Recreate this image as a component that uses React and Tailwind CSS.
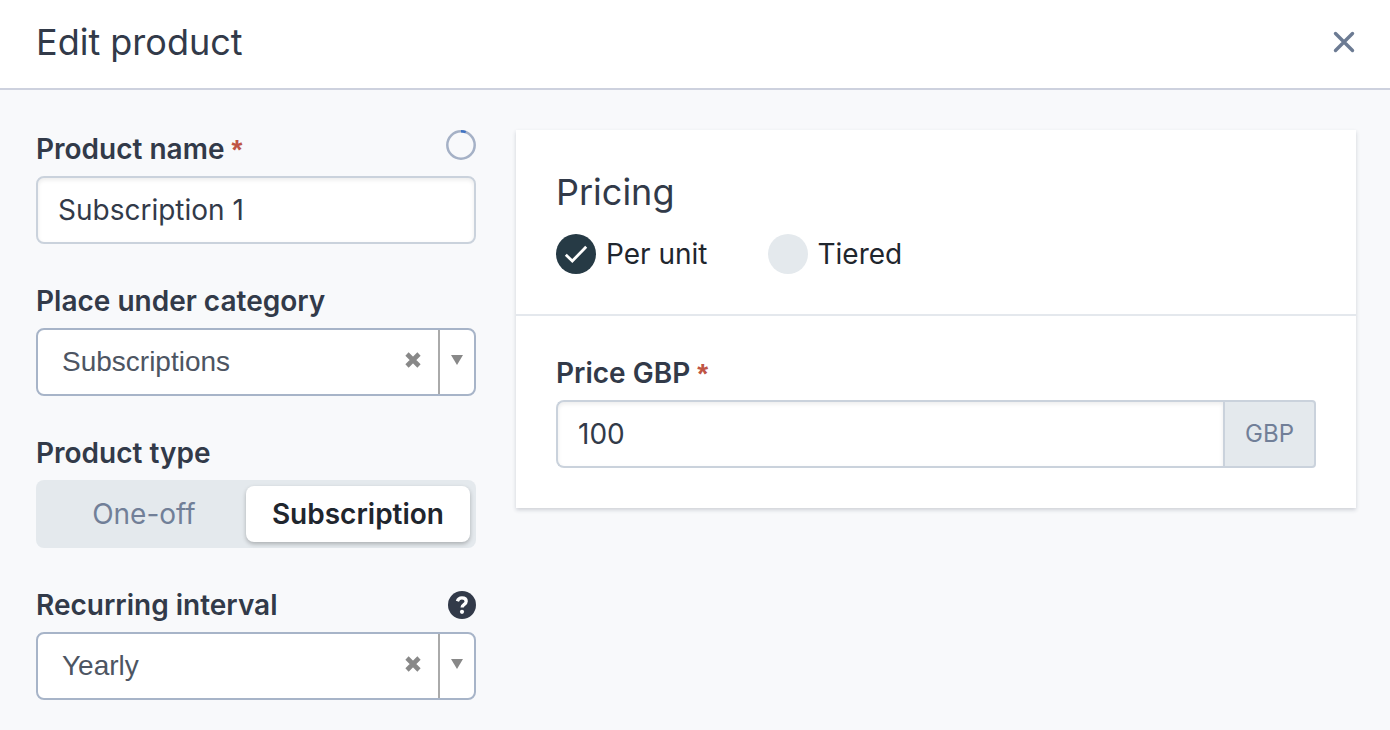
import { useState } from 'react'

const CATEGORIES = ['Subscriptions', 'Services', 'Hardware']
const INTERVALS = ['Yearly', 'Quarterly', 'Monthly']

function Label({ htmlFor, required, children }){
  return (
    <label htmlFor={htmlFor} className="text-[28px] leading-[38px] font-semibold text-[#323a49]">
      {children}
      {required && <> <span className="font-['Liberation_Sans',sans-serif] leading-none font-bold text-[#bf5545]">*</span></>}
    </label>
  )
}

function Spinner(){
  return (
    <svg viewBox="0 0 30 30" fill="none" strokeWidth="2.500" className="size-[30px]" role="status" aria-label="Saving">
      <circle cx="15" cy="15" r="13.700" stroke="#a5b1c6" />
      <path d="M15 1.300a13.700 13.700 0 0 1 4.700 .85" stroke="#3f73c4" />
    </svg>
  )
}

function HelpIcon(){
  return (
    <svg viewBox="0 0 28 28" fill="none" className="size-7">
      <circle cx="14" cy="14" r="14" fill="#323a49" />
      <path d="M9.400 10.200C10.100 7.900 11.700 6.800 13.900 6.800c2.600 0 4.300 1.300 4.300 3.400 0 1.700-.9 2.500-2.200 3.400-1.200.8-1.900 1.300-1.900 3" stroke="#fff" strokeWidth="3.300" />
      <circle cx="14" cy="20.800" r="2.100" fill="#fff" />
    </svg>
  )
}

function SelectBox({ id, value, setValue, options }){
  return (
    <div className="flex h-[68px] bg-white border-2 border-[#a7b4c8] rounded-lg overflow-hidden">
      <select id={id} value={value} onChange={e=>setValue(e.target.value)} className="flex-1 min-w-0 appearance-none pl-6 font-['Liberation_Sans',sans-serif] text-[28px] text-[#4d5562] outline-none">
        <option value=""></option>
        {options.map(o=> <option key={o} value={o}>{o}</option>)}
      </select>
      <button type="button" aria-label="Clear" onClick={()=>setValue('')} className="w-[50px] pb-1 flex items-center justify-center">
        <svg viewBox="0 0 16 16" className="size-4" stroke="#888" strokeWidth="4.600">
          <path d="M2 2l12 12M14 2L2 14" />
        </svg>
      </button>
      <label htmlFor={id} aria-label="Open list" className="w-9 pb-1 border-l-2 border-[#aaa] flex items-center justify-center">
        <svg viewBox="0 0 12 10" className="w-3 h-[10px]" fill="#888">
          <path d="M0 0h12L6 10z" />
        </svg>
      </label>
    </div>
  )
}

function TypeToggle({ type, setType }){
  return (
    <div role="group" aria-labelledby="type-label" className="flex h-[68px] p-[6px] bg-[#e4e9ed] rounded-lg text-[28px]">
      {['One-off','Subscription'].map(t=> (
        <button key={t} type="button" aria-pressed={type===t} onClick={()=>setType(t)} className={`rounded-lg ${type===t ? 'px-[26px] bg-white text-[#1f262e] font-semibold shadow-[0_2px_4px_rgba(0,0,0,0.25)]' : 'flex-1 text-[#717f98]'}`}>
          {t}
        </button>
      ))}
    </div>
  )
}

function PricingOption({ value, pricing, setPricing, children }){
  return (
    <label className="flex items-center gap-[10px] text-[28px] leading-10 text-[#1f262e]">
      <span className="grid place-items-center">
        <input type="radio" name="pricing" checked={pricing===value} onChange={()=>setPricing(value)} className="col-start-1 row-start-1 appearance-none size-10 rounded-full bg-[#e4e9ed] checked:bg-[#263a45]" />
        {pricing===value && (
          <svg viewBox="0 0 40 40" fill="none" stroke="#fff" strokeWidth="2.800" className="col-start-1 row-start-1 size-10 pointer-events-none">
            <path d="M9.800 20.800l6.500 6.200L30.200 12.800" />
          </svg>
        )}
      </span>
      {children}
    </label>
  )
}

export default function App(){
  const [name, setName] = useState('Subscription 1')
  const [category, setCategory] = useState('Subscriptions')
  const [type, setType] = useState('Subscription')
  const [interval, setInterval] = useState('Yearly')
  const [pricing, setPricing] = useState('unit')
  const [price, setPrice] = useState('100')

  return (
    <div className="min-h-screen flex flex-col bg-[#f8f9fb] font-['Inter',sans-serif] text-[#323a49]">
      <header className="flex items-center justify-between h-[90px] pl-9 pr-[34px] pb-1 bg-white border-b-2 border-[#cdd1de]">
        <h1 className="text-4xl">Edit product</h1>
        <button type="button" aria-label="Close" className="text-[#6c7b93]">
          <svg viewBox="0 0 24 24" fill="none" stroke="currentColor" strokeWidth="3.400" strokeLinecap="round" className="size-6">
            <path d="M3.500 3.500l17 17M20.500 3.500l-17 17" />
          </svg>
        </button>
      </header>

      <main className="flex items-start gap-10 pl-9 pr-[34px] pt-10 pb-[30px]">
        <div className="w-[440px] shrink-0 flex flex-col gap-[38px]">
          <div className="flex flex-col gap-2">
            <div className="flex items-start justify-between">
              <Label htmlFor="name" required>Product name</Label>
              <Spinner />
            </div>
            <input id="name" value={name} onChange={e=>setName(e.target.value)} className="w-full h-[68px] px-5 bg-white border-2 border-[#cad2dc] rounded-lg text-[28px] shadow-[inset_0_2px_4px_rgba(0,0,0,0.08)] outline-none" />
          </div>

          <div className="flex flex-col gap-2">
            <Label htmlFor="category">Place under category</Label>
            <SelectBox id="category" value={category} setValue={setCategory} options={CATEGORIES} />
          </div>

          <div className="flex flex-col gap-2">
            <span id="type-label" className="text-[28px] leading-[38px] font-semibold">Product type</span>
            <TypeToggle type={type} setType={setType} />
          </div>

          <div className="flex flex-col gap-2">
            <div className="flex items-center justify-between">
              <Label htmlFor="interval">Recurring interval</Label>
              <button type="button" aria-label="Help"><HelpIcon /></button>
            </div>
            <SelectBox id="interval" value={interval} setValue={setInterval} options={INTERVALS} />
          </div>
        </div>

        <section className="flex-1 min-w-0 bg-white shadow-[0_2px_4px_rgba(40,50,70,0.2)]">
          <div className="p-10 border-b-2 border-[#e4e8ed]">
            <h2 className="mb-5 text-4xl leading-[44px]">Pricing</h2>
            <div className="flex gap-[60px]">
              <PricingOption value="unit" pricing={pricing} setPricing={setPricing}>Per unit</PricingOption>
              <PricingOption value="tiered" pricing={pricing} setPricing={setPricing}>Tiered</PricingOption>
            </div>
          </div>
          <div className="flex flex-col gap-2 px-10 pt-[38px] pb-10">
            <Label htmlFor="price" required>Price GBP</Label>
            <div className="flex h-[68px]">
              <input id="price" value={price} onChange={e=>setPrice(e.target.value)} className="flex-1 min-w-0 px-5 border-2 border-r-0 border-[#cad2dc] rounded-l-lg text-[28px] shadow-[inset_0_2px_4px_rgba(0,0,0,0.08)] outline-none" />
              <span className="flex items-center px-5 bg-[#e4e9ed] border-2 border-[#cad2dc] rounded-r text-2xl text-[#717f98]">GBP</span>
            </div>
          </div>
        </section>
      </main>
    </div>
  )
}
